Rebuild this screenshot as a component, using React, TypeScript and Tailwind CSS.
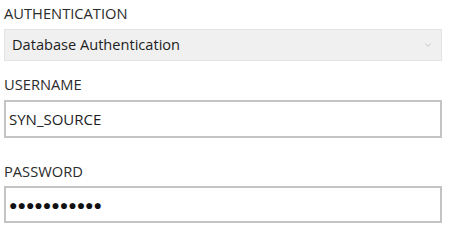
import { ChevronDown } from 'lucide-react'

function Label({ children }: { children: string }) {
  return <div className="text-[14.7px] leading-[20px] text-[#2b2b2b]">{children}</div>
}

export default function App() {
  return (
    <div className="w-[453px] h-[228px] bg-white px-1 pt-[3px] font-['Open_Sans',sans-serif]">
      <div className="w-[438px]">
        <Label>AUTHENTICATION</Label>
        <div className="mt-[6px] h-[32px] flex items-center justify-between border border-[#e3e3e3] bg-[#f0f0f0] pl-[7px] pr-[8px]">
          <span className="text-[14.6px] text-[#1e1e1e]">Database Authentication</span>
          <ChevronDown className="w-[10px] h-[10px] text-[#a8a8a8]" strokeWidth={1.5} />
        </div>

        <div className="mt-[13px]">
          <Label>USERNAME</Label>
        </div>
        <div className="mt-[6px] h-[38px] flex items-center border-2 border-[#c4c4c4] bg-white pl-[3px]">
          <span className="text-[15px] text-[#1e1e1e]">SYN_SOURCE</span>
        </div>

        <div className="mt-[23px]">
          <Label>PASSWORD</Label>
        </div>
        <div className="mt-[5px] h-[37px] flex items-center border-2 border-[#c4c4c4] bg-white pl-[3px]">
          <span className="text-[14px] text-[#111]">●●●●●●●●●●●</span>
        </div>
      </div>
    </div>
  )
}
